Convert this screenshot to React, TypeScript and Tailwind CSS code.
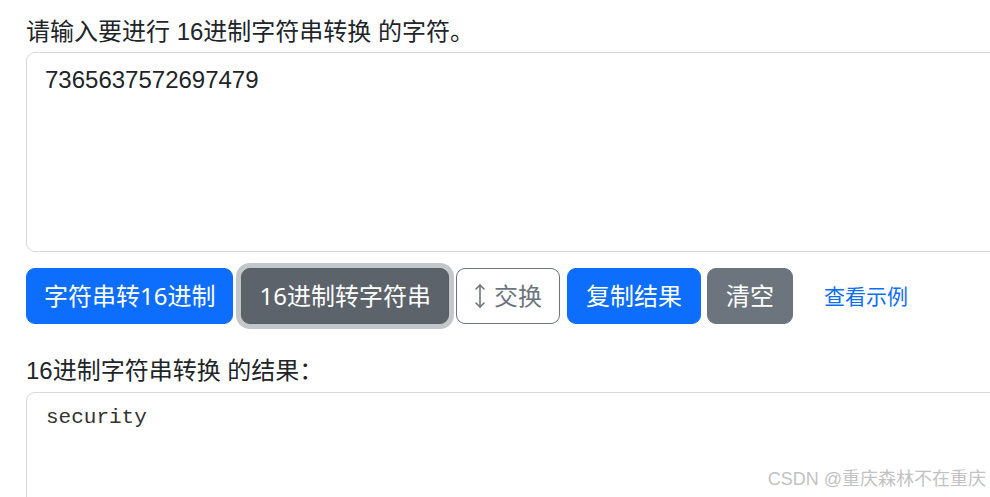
import { useState } from "react";

const sans = "font-['Liberation_Sans','Noto_Sans_CJK_SC',sans-serif]";
const btnFont = "font-['Noto_Sans','Noto_Sans_CJK_SC',sans-serif]";

function SwapIcon() {
  return (
    <svg width="12" height="26" viewBox="0 0 12 26" fill="none" stroke="currentColor" strokeWidth="1.6" strokeLinecap="round" strokeLinejoin="round" aria-hidden>
      <path d="M6 2v22" />
      <path d="M2 6l4-4 4 4" />
      <path d="M2 20l4 4 4-4" />
    </svg>
  );
}

export default function App() {
  const [input, setInput] = useState("7365637572697479");
  const [output] = useState("security");

  return (
    <div className={`relative h-[497px] w-full overflow-hidden bg-white text-[#212529] ${sans}`}>
      <div className="w-[1100px] pl-[26px] pt-[14px]">
        {/* Entrée */}
        <label className="block text-[24px] leading-[36px]">请输入要进行 16进制字符串转换 的字符。</label>
        <textarea
          value={input}
          onChange={(e) => setInput(e.target.value)}
          className="mt-[2px] block h-[200px] w-full resize-none rounded-[9px] border border-[#d5d8dc] px-[18px] py-[9px] text-[24px] leading-[36px] text-[#212529] outline-none"
        />

        {/* Actions */}
        <div className={`mt-[16px] flex items-center ${btnFont}`}>
          <button type="button" className="h-[56px] rounded-[9px] border border-[#0d6efd] bg-[#0d6efd] px-[17px] text-[24px] leading-[36px] text-white">
            字符串转16进制
          </button>
          <button
            type="button"
            className="ml-[8px] h-[56px] rounded-[9px] border border-[#565e64] bg-[#5c636a] px-[17px] text-[24px] leading-[36px] text-white shadow-[0_0_0_5px_#c3c6ca]"
          >
            16进制转字符串
          </button>
          <button
            type="button"
            className="ml-[7px] flex h-[56px] items-center gap-[8px] rounded-[9px] border border-[#6c757d] bg-white px-[17px] text-[24px] leading-[36px] text-[#6c757d]"
          >
            <SwapIcon />
            交换
          </button>
          <button type="button" className="ml-[7px] h-[56px] rounded-[9px] border border-[#0d6efd] bg-[#0d6efd] px-[18px] text-[24px] leading-[36px] text-white">
            复制结果
          </button>
          <button type="button" className="ml-[6px] h-[56px] rounded-[9px] border border-[#6c757d] bg-[#6c757d] px-[18px] text-[24px] leading-[36px] text-white">
            清空
          </button>
          <a href="#" className="ml-[31px] text-[21px] leading-[36px] text-[#0d6efd] no-underline">
            查看示例
          </a>
        </div>

        {/* Résultat */}
        <label className="mt-[29px] block text-[24px] leading-[36px]">16进制字符串转换 的结果：</label>
        <textarea
          readOnly
          value={output}
          className="mt-[3px] block h-[200px] w-full resize-none rounded-[9px] border border-[#d5d8dc] px-[19px] py-[9px] font-['Liberation_Mono',monospace] text-[21px] leading-[31px] text-[#333] outline-none"
        />
      </div>

      {/* Filigrane */}
      <div className="absolute bottom-[6px] right-[4px] text-[18px] leading-[24px] text-[#c2c2c2] font-['Liberation_Sans','Noto_Sans_CJK_SC',sans-serif]">
        CSDN @重庆森林不在重庆
      </div>
    </div>
  );
}
